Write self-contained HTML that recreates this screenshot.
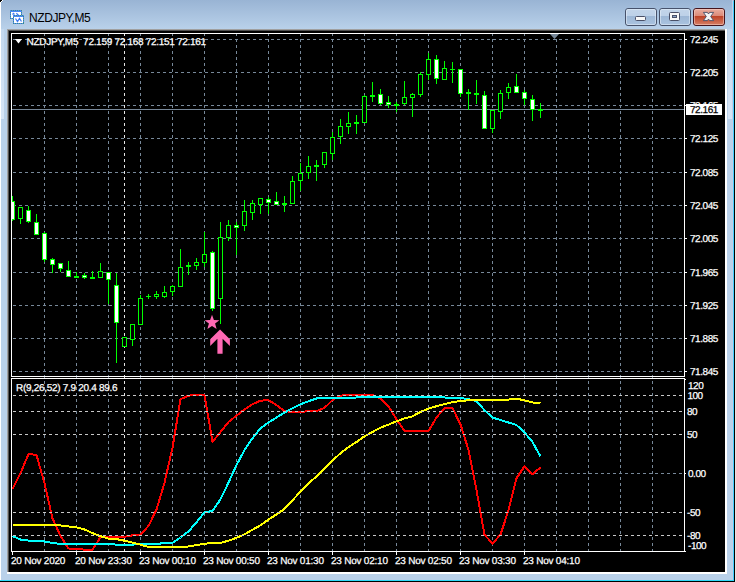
<!DOCTYPE html>
<html lang="en"><head><meta charset="utf-8"><title>NZDJPY,M5</title>
<style>html,body{margin:0;padding:0;background:#b9d1ea;overflow:hidden}svg{display:block}text{font-family:"Liberation Sans",Arial,sans-serif}.ax{font-size:10px;fill:#fff;stroke:#fff;stroke-width:0.25px;letter-spacing:-0.45px;text-rendering:geometricPrecision}.tm{letter-spacing:-0.23px}.hd{letter-spacing:-0.3px}</style></head><body>
<svg width="736" height="582" viewBox="0 0 736 582">
<defs><linearGradient id="tb" x1="0" y1="0" x2="0" y2="1"><stop offset="0" stop-color="#99b4d4"/><stop offset="1" stop-color="#b9d1ea"/></linearGradient><linearGradient id="bt" x1="0" y1="0" x2="0" y2="1"><stop offset="0" stop-color="#c3d5ea"/><stop offset="0.43" stop-color="#bdd1e8"/><stop offset="0.45" stop-color="#9db7d6"/><stop offset="1" stop-color="#abc4e0"/></linearGradient><linearGradient id="bc" x1="0" y1="0" x2="0" y2="1"><stop offset="0" stop-color="#eab0a3"/><stop offset="0.43" stop-color="#dc8a78"/><stop offset="0.45" stop-color="#bd4126"/><stop offset="1" stop-color="#d88268"/></linearGradient><linearGradient id="sb" x1="0" y1="0" x2="0" y2="1"><stop offset="0" stop-color="#c3d8ee"/><stop offset="1" stop-color="#d6e5f6"/></linearGradient></defs>
<g shape-rendering="crispEdges">
<rect x="0" y="0" width="736" height="582" fill="#b9d1ea"/>
<rect x="0" y="0" width="736" height="29" fill="url(#tb)"/>
<rect x="1" y="29" width="3" height="90" fill="url(#sb)"/><rect x="728" y="29" width="4" height="90" fill="url(#sb)"/>
<rect x="0" y="2" width="1" height="578" fill="#ffffff"/>
<rect x="732" y="0" width="1" height="580" fill="#c4cde6"/>
<rect x="733" y="1" width="1" height="580" fill="#40d0ff"/>
<rect x="0" y="580" width="734" height="1" fill="#30d8f8"/>
<rect x="734" y="0" width="1" height="582" fill="#000"/>
<rect x="735" y="0" width="1" height="582" fill="#e4e4e4"/>
<rect x="0" y="581" width="735" height="1" fill="#000"/>
<rect x="0" y="0" width="2" height="1" fill="#000"/><rect x="0" y="1" width="1" height="1" fill="#000"/>
<rect x="2" y="0" width="1" height="1" fill="#fff"/><rect x="1" y="1" width="1" height="1" fill="#fff"/>
<rect x="7" y="29" width="720" height="545" fill="#ffffff"/>
<rect x="7" y="29" width="718" height="543" fill="#a0a0a0"/>
<rect x="8" y="30" width="717" height="542" fill="#505050"/>
<rect x="9" y="31" width="716" height="541" fill="#000000"/>
</g>
<g shape-rendering="crispEdges">
<path d="M13 39h3M19 39h3M25 39h3M31 39h3M37 39h3M43 39h3M49 39h3M55 39h3M61 39h3M67 39h3M73 39h3M79 39h3M85 39h3M91 39h3M97 39h3M103 39h3M109 39h3M115 39h3M121 39h3M127 39h3M133 39h3M139 39h3M145 39h3M151 39h3M157 39h3M163 39h3M169 39h3M175 39h3M181 39h3M187 39h3M193 39h3M199 39h3M205 39h3M211 39h3M217 39h3M223 39h3M229 39h3M235 39h3M241 39h3M247 39h3M253 39h3M259 39h3M265 39h3M271 39h3M277 39h3M283 39h3M289 39h3M295 39h3M301 39h3M307 39h3M313 39h3M319 39h3M325 39h3M331 39h3M337 39h3M343 39h3M349 39h3M355 39h3M361 39h3M367 39h3M373 39h3M379 39h3M385 39h3M391 39h3M397 39h3M403 39h3M409 39h3M415 39h3M421 39h3M427 39h3M433 39h3M439 39h3M445 39h3M451 39h3M457 39h3M463 39h3M469 39h3M475 39h3M481 39h3M487 39h3M493 39h3M499 39h3M505 39h3M511 39h3M517 39h3M523 39h3M529 39h3M535 39h3M541 39h3M547 39h3M553 39h3M559 39h3M565 39h3M571 39h3M577 39h3M583 39h3M589 39h3M595 39h3M601 39h3M607 39h3M613 39h3M619 39h3M625 39h3M631 39h3M637 39h3M643 39h3M649 39h3M655 39h3M661 39h3M667 39h3M673 39h3M679 39h3" stroke="#778899" stroke-width="1" fill="none" transform="translate(0,0.5)"/>
<path d="M13 72h3M19 72h3M25 72h3M31 72h3M37 72h3M43 72h3M49 72h3M55 72h3M61 72h3M67 72h3M73 72h3M79 72h3M85 72h3M91 72h3M97 72h3M103 72h3M109 72h3M115 72h3M121 72h3M127 72h3M133 72h3M139 72h3M145 72h3M151 72h3M157 72h3M163 72h3M169 72h3M175 72h3M181 72h3M187 72h3M193 72h3M199 72h3M205 72h3M211 72h3M217 72h3M223 72h3M229 72h3M235 72h3M241 72h3M247 72h3M253 72h3M259 72h3M265 72h3M271 72h3M277 72h3M283 72h3M289 72h3M295 72h3M301 72h3M307 72h3M313 72h3M319 72h3M325 72h3M331 72h3M337 72h3M343 72h3M349 72h3M355 72h3M361 72h3M367 72h3M373 72h3M379 72h3M385 72h3M391 72h3M397 72h3M403 72h3M409 72h3M415 72h3M421 72h3M427 72h3M433 72h3M439 72h3M445 72h3M451 72h3M457 72h3M463 72h3M469 72h3M475 72h3M481 72h3M487 72h3M493 72h3M499 72h3M505 72h3M511 72h3M517 72h3M523 72h3M529 72h3M535 72h3M541 72h3M547 72h3M553 72h3M559 72h3M565 72h3M571 72h3M577 72h3M583 72h3M589 72h3M595 72h3M601 72h3M607 72h3M613 72h3M619 72h3M625 72h3M631 72h3M637 72h3M643 72h3M649 72h3M655 72h3M661 72h3M667 72h3M673 72h3M679 72h3" stroke="#778899" stroke-width="1" fill="none" transform="translate(0,0.5)"/>
<path d="M13 105h3M19 105h3M25 105h3M31 105h3M37 105h3M43 105h3M49 105h3M55 105h3M61 105h3M67 105h3M73 105h3M79 105h3M85 105h3M91 105h3M97 105h3M103 105h3M109 105h3M115 105h3M121 105h3M127 105h3M133 105h3M139 105h3M145 105h3M151 105h3M157 105h3M163 105h3M169 105h3M175 105h3M181 105h3M187 105h3M193 105h3M199 105h3M205 105h3M211 105h3M217 105h3M223 105h3M229 105h3M235 105h3M241 105h3M247 105h3M253 105h3M259 105h3M265 105h3M271 105h3M277 105h3M283 105h3M289 105h3M295 105h3M301 105h3M307 105h3M313 105h3M319 105h3M325 105h3M331 105h3M337 105h3M343 105h3M349 105h3M355 105h3M361 105h3M367 105h3M373 105h3M379 105h3M385 105h3M391 105h3M397 105h3M403 105h3M409 105h3M415 105h3M421 105h3M427 105h3M433 105h3M439 105h3M445 105h3M451 105h3M457 105h3M463 105h3M469 105h3M475 105h3M481 105h3M487 105h3M493 105h3M499 105h3M505 105h3M511 105h3M517 105h3M523 105h3M529 105h3M535 105h3M541 105h3M547 105h3M553 105h3M559 105h3M565 105h3M571 105h3M577 105h3M583 105h3M589 105h3M595 105h3M601 105h3M607 105h3M613 105h3M619 105h3M625 105h3M631 105h3M637 105h3M643 105h3M649 105h3M655 105h3M661 105h3M667 105h3M673 105h3M679 105h3" stroke="#778899" stroke-width="1" fill="none" transform="translate(0,0.5)"/>
<path d="M13 138h3M19 138h3M25 138h3M31 138h3M37 138h3M43 138h3M49 138h3M55 138h3M61 138h3M67 138h3M73 138h3M79 138h3M85 138h3M91 138h3M97 138h3M103 138h3M109 138h3M115 138h3M121 138h3M127 138h3M133 138h3M139 138h3M145 138h3M151 138h3M157 138h3M163 138h3M169 138h3M175 138h3M181 138h3M187 138h3M193 138h3M199 138h3M205 138h3M211 138h3M217 138h3M223 138h3M229 138h3M235 138h3M241 138h3M247 138h3M253 138h3M259 138h3M265 138h3M271 138h3M277 138h3M283 138h3M289 138h3M295 138h3M301 138h3M307 138h3M313 138h3M319 138h3M325 138h3M331 138h3M337 138h3M343 138h3M349 138h3M355 138h3M361 138h3M367 138h3M373 138h3M379 138h3M385 138h3M391 138h3M397 138h3M403 138h3M409 138h3M415 138h3M421 138h3M427 138h3M433 138h3M439 138h3M445 138h3M451 138h3M457 138h3M463 138h3M469 138h3M475 138h3M481 138h3M487 138h3M493 138h3M499 138h3M505 138h3M511 138h3M517 138h3M523 138h3M529 138h3M535 138h3M541 138h3M547 138h3M553 138h3M559 138h3M565 138h3M571 138h3M577 138h3M583 138h3M589 138h3M595 138h3M601 138h3M607 138h3M613 138h3M619 138h3M625 138h3M631 138h3M637 138h3M643 138h3M649 138h3M655 138h3M661 138h3M667 138h3M673 138h3M679 138h3" stroke="#778899" stroke-width="1" fill="none" transform="translate(0,0.5)"/>
<path d="M13 172h3M19 172h3M25 172h3M31 172h3M37 172h3M43 172h3M49 172h3M55 172h3M61 172h3M67 172h3M73 172h3M79 172h3M85 172h3M91 172h3M97 172h3M103 172h3M109 172h3M115 172h3M121 172h3M127 172h3M133 172h3M139 172h3M145 172h3M151 172h3M157 172h3M163 172h3M169 172h3M175 172h3M181 172h3M187 172h3M193 172h3M199 172h3M205 172h3M211 172h3M217 172h3M223 172h3M229 172h3M235 172h3M241 172h3M247 172h3M253 172h3M259 172h3M265 172h3M271 172h3M277 172h3M283 172h3M289 172h3M295 172h3M301 172h3M307 172h3M313 172h3M319 172h3M325 172h3M331 172h3M337 172h3M343 172h3M349 172h3M355 172h3M361 172h3M367 172h3M373 172h3M379 172h3M385 172h3M391 172h3M397 172h3M403 172h3M409 172h3M415 172h3M421 172h3M427 172h3M433 172h3M439 172h3M445 172h3M451 172h3M457 172h3M463 172h3M469 172h3M475 172h3M481 172h3M487 172h3M493 172h3M499 172h3M505 172h3M511 172h3M517 172h3M523 172h3M529 172h3M535 172h3M541 172h3M547 172h3M553 172h3M559 172h3M565 172h3M571 172h3M577 172h3M583 172h3M589 172h3M595 172h3M601 172h3M607 172h3M613 172h3M619 172h3M625 172h3M631 172h3M637 172h3M643 172h3M649 172h3M655 172h3M661 172h3M667 172h3M673 172h3M679 172h3" stroke="#778899" stroke-width="1" fill="none" transform="translate(0,0.5)"/>
<path d="M13 205h3M19 205h3M25 205h3M31 205h3M37 205h3M43 205h3M49 205h3M55 205h3M61 205h3M67 205h3M73 205h3M79 205h3M85 205h3M91 205h3M97 205h3M103 205h3M109 205h3M115 205h3M121 205h3M127 205h3M133 205h3M139 205h3M145 205h3M151 205h3M157 205h3M163 205h3M169 205h3M175 205h3M181 205h3M187 205h3M193 205h3M199 205h3M205 205h3M211 205h3M217 205h3M223 205h3M229 205h3M235 205h3M241 205h3M247 205h3M253 205h3M259 205h3M265 205h3M271 205h3M277 205h3M283 205h3M289 205h3M295 205h3M301 205h3M307 205h3M313 205h3M319 205h3M325 205h3M331 205h3M337 205h3M343 205h3M349 205h3M355 205h3M361 205h3M367 205h3M373 205h3M379 205h3M385 205h3M391 205h3M397 205h3M403 205h3M409 205h3M415 205h3M421 205h3M427 205h3M433 205h3M439 205h3M445 205h3M451 205h3M457 205h3M463 205h3M469 205h3M475 205h3M481 205h3M487 205h3M493 205h3M499 205h3M505 205h3M511 205h3M517 205h3M523 205h3M529 205h3M535 205h3M541 205h3M547 205h3M553 205h3M559 205h3M565 205h3M571 205h3M577 205h3M583 205h3M589 205h3M595 205h3M601 205h3M607 205h3M613 205h3M619 205h3M625 205h3M631 205h3M637 205h3M643 205h3M649 205h3M655 205h3M661 205h3M667 205h3M673 205h3M679 205h3" stroke="#778899" stroke-width="1" fill="none" transform="translate(0,0.5)"/>
<path d="M13 238h3M19 238h3M25 238h3M31 238h3M37 238h3M43 238h3M49 238h3M55 238h3M61 238h3M67 238h3M73 238h3M79 238h3M85 238h3M91 238h3M97 238h3M103 238h3M109 238h3M115 238h3M121 238h3M127 238h3M133 238h3M139 238h3M145 238h3M151 238h3M157 238h3M163 238h3M169 238h3M175 238h3M181 238h3M187 238h3M193 238h3M199 238h3M205 238h3M211 238h3M217 238h3M223 238h3M229 238h3M235 238h3M241 238h3M247 238h3M253 238h3M259 238h3M265 238h3M271 238h3M277 238h3M283 238h3M289 238h3M295 238h3M301 238h3M307 238h3M313 238h3M319 238h3M325 238h3M331 238h3M337 238h3M343 238h3M349 238h3M355 238h3M361 238h3M367 238h3M373 238h3M379 238h3M385 238h3M391 238h3M397 238h3M403 238h3M409 238h3M415 238h3M421 238h3M427 238h3M433 238h3M439 238h3M445 238h3M451 238h3M457 238h3M463 238h3M469 238h3M475 238h3M481 238h3M487 238h3M493 238h3M499 238h3M505 238h3M511 238h3M517 238h3M523 238h3M529 238h3M535 238h3M541 238h3M547 238h3M553 238h3M559 238h3M565 238h3M571 238h3M577 238h3M583 238h3M589 238h3M595 238h3M601 238h3M607 238h3M613 238h3M619 238h3M625 238h3M631 238h3M637 238h3M643 238h3M649 238h3M655 238h3M661 238h3M667 238h3M673 238h3M679 238h3" stroke="#778899" stroke-width="1" fill="none" transform="translate(0,0.5)"/>
<path d="M13 272h3M19 272h3M25 272h3M31 272h3M37 272h3M43 272h3M49 272h3M55 272h3M61 272h3M67 272h3M73 272h3M79 272h3M85 272h3M91 272h3M97 272h3M103 272h3M109 272h3M115 272h3M121 272h3M127 272h3M133 272h3M139 272h3M145 272h3M151 272h3M157 272h3M163 272h3M169 272h3M175 272h3M181 272h3M187 272h3M193 272h3M199 272h3M205 272h3M211 272h3M217 272h3M223 272h3M229 272h3M235 272h3M241 272h3M247 272h3M253 272h3M259 272h3M265 272h3M271 272h3M277 272h3M283 272h3M289 272h3M295 272h3M301 272h3M307 272h3M313 272h3M319 272h3M325 272h3M331 272h3M337 272h3M343 272h3M349 272h3M355 272h3M361 272h3M367 272h3M373 272h3M379 272h3M385 272h3M391 272h3M397 272h3M403 272h3M409 272h3M415 272h3M421 272h3M427 272h3M433 272h3M439 272h3M445 272h3M451 272h3M457 272h3M463 272h3M469 272h3M475 272h3M481 272h3M487 272h3M493 272h3M499 272h3M505 272h3M511 272h3M517 272h3M523 272h3M529 272h3M535 272h3M541 272h3M547 272h3M553 272h3M559 272h3M565 272h3M571 272h3M577 272h3M583 272h3M589 272h3M595 272h3M601 272h3M607 272h3M613 272h3M619 272h3M625 272h3M631 272h3M637 272h3M643 272h3M649 272h3M655 272h3M661 272h3M667 272h3M673 272h3M679 272h3" stroke="#778899" stroke-width="1" fill="none" transform="translate(0,0.5)"/>
<path d="M13 305h3M19 305h3M25 305h3M31 305h3M37 305h3M43 305h3M49 305h3M55 305h3M61 305h3M67 305h3M73 305h3M79 305h3M85 305h3M91 305h3M97 305h3M103 305h3M109 305h3M115 305h3M121 305h3M127 305h3M133 305h3M139 305h3M145 305h3M151 305h3M157 305h3M163 305h3M169 305h3M175 305h3M181 305h3M187 305h3M193 305h3M199 305h3M205 305h3M211 305h3M217 305h3M223 305h3M229 305h3M235 305h3M241 305h3M247 305h3M253 305h3M259 305h3M265 305h3M271 305h3M277 305h3M283 305h3M289 305h3M295 305h3M301 305h3M307 305h3M313 305h3M319 305h3M325 305h3M331 305h3M337 305h3M343 305h3M349 305h3M355 305h3M361 305h3M367 305h3M373 305h3M379 305h3M385 305h3M391 305h3M397 305h3M403 305h3M409 305h3M415 305h3M421 305h3M427 305h3M433 305h3M439 305h3M445 305h3M451 305h3M457 305h3M463 305h3M469 305h3M475 305h3M481 305h3M487 305h3M493 305h3M499 305h3M505 305h3M511 305h3M517 305h3M523 305h3M529 305h3M535 305h3M541 305h3M547 305h3M553 305h3M559 305h3M565 305h3M571 305h3M577 305h3M583 305h3M589 305h3M595 305h3M601 305h3M607 305h3M613 305h3M619 305h3M625 305h3M631 305h3M637 305h3M643 305h3M649 305h3M655 305h3M661 305h3M667 305h3M673 305h3M679 305h3" stroke="#778899" stroke-width="1" fill="none" transform="translate(0,0.5)"/>
<path d="M13 338h3M19 338h3M25 338h3M31 338h3M37 338h3M43 338h3M49 338h3M55 338h3M61 338h3M67 338h3M73 338h3M79 338h3M85 338h3M91 338h3M97 338h3M103 338h3M109 338h3M115 338h3M121 338h3M127 338h3M133 338h3M139 338h3M145 338h3M151 338h3M157 338h3M163 338h3M169 338h3M175 338h3M181 338h3M187 338h3M193 338h3M199 338h3M205 338h3M211 338h3M217 338h3M223 338h3M229 338h3M235 338h3M241 338h3M247 338h3M253 338h3M259 338h3M265 338h3M271 338h3M277 338h3M283 338h3M289 338h3M295 338h3M301 338h3M307 338h3M313 338h3M319 338h3M325 338h3M331 338h3M337 338h3M343 338h3M349 338h3M355 338h3M361 338h3M367 338h3M373 338h3M379 338h3M385 338h3M391 338h3M397 338h3M403 338h3M409 338h3M415 338h3M421 338h3M427 338h3M433 338h3M439 338h3M445 338h3M451 338h3M457 338h3M463 338h3M469 338h3M475 338h3M481 338h3M487 338h3M493 338h3M499 338h3M505 338h3M511 338h3M517 338h3M523 338h3M529 338h3M535 338h3M541 338h3M547 338h3M553 338h3M559 338h3M565 338h3M571 338h3M577 338h3M583 338h3M589 338h3M595 338h3M601 338h3M607 338h3M613 338h3M619 338h3M625 338h3M631 338h3M637 338h3M643 338h3M649 338h3M655 338h3M661 338h3M667 338h3M673 338h3M679 338h3" stroke="#778899" stroke-width="1" fill="none" transform="translate(0,0.5)"/>
<path d="M13 371h3M19 371h3M25 371h3M31 371h3M37 371h3M43 371h3M49 371h3M55 371h3M61 371h3M67 371h3M73 371h3M79 371h3M85 371h3M91 371h3M97 371h3M103 371h3M109 371h3M115 371h3M121 371h3M127 371h3M133 371h3M139 371h3M145 371h3M151 371h3M157 371h3M163 371h3M169 371h3M175 371h3M181 371h3M187 371h3M193 371h3M199 371h3M205 371h3M211 371h3M217 371h3M223 371h3M229 371h3M235 371h3M241 371h3M247 371h3M253 371h3M259 371h3M265 371h3M271 371h3M277 371h3M283 371h3M289 371h3M295 371h3M301 371h3M307 371h3M313 371h3M319 371h3M325 371h3M331 371h3M337 371h3M343 371h3M349 371h3M355 371h3M361 371h3M367 371h3M373 371h3M379 371h3M385 371h3M391 371h3M397 371h3M403 371h3M409 371h3M415 371h3M421 371h3M427 371h3M433 371h3M439 371h3M445 371h3M451 371h3M457 371h3M463 371h3M469 371h3M475 371h3M481 371h3M487 371h3M493 371h3M499 371h3M505 371h3M511 371h3M517 371h3M523 371h3M529 371h3M535 371h3M541 371h3M547 371h3M553 371h3M559 371h3M565 371h3M571 371h3M577 371h3M583 371h3M589 371h3M595 371h3M601 371h3M607 371h3M613 371h3M619 371h3M625 371h3M631 371h3M637 371h3M643 371h3M649 371h3M655 371h3M661 371h3M667 371h3M673 371h3M679 371h3" stroke="#778899" stroke-width="1" fill="none" transform="translate(0,0.5)"/>
<path d="M44 34v2M44 39v3M44 45v3M44 51v3M44 57v3M44 63v3M44 69v3M44 75v3M44 81v3M44 87v3M44 93v3M44 99v3M44 105v3M44 111v3M44 117v3M44 123v3M44 129v3M44 135v3M44 141v3M44 147v3M44 153v3M44 159v3M44 165v3M44 171v3M44 177v3M44 183v3M44 189v3M44 195v3M44 201v3M44 207v3M44 213v3M44 219v3M44 225v3M44 231v3M44 237v3M44 243v3M44 249v3M44 255v3M44 261v3M44 267v3M44 273v3M44 279v3M44 285v3M44 291v3M44 297v3M44 303v3M44 309v3M44 315v3M44 321v3M44 327v3M44 333v3M44 339v3M44 345v3M44 351v3M44 357v3M44 363v3M44 369v3M44 375v1" stroke="#778899" stroke-width="1" fill="none" transform="translate(0.5,0)"/>
<path d="M44 377v1" stroke="#778899" stroke-width="1" fill="none" transform="translate(0.5,0)"/>
<path d="M44 381v3M44 387v3M44 393v3M44 399v3M44 405v3M44 411v3M44 417v3M44 423v3M44 429v3M44 435v3M44 441v3M44 447v3M44 453v3M44 459v3M44 465v3M44 471v3M44 477v3M44 483v3M44 489v3M44 495v3M44 501v3M44 507v3M44 513v3M44 519v3M44 525v3M44 531v3M44 537v3M44 543v3M44 549v2" stroke="#778899" stroke-width="1" fill="none" transform="translate(0.5,0)"/>
<path d="M76 34v2M76 39v3M76 45v3M76 51v3M76 57v3M76 63v3M76 69v3M76 75v3M76 81v3M76 87v3M76 93v3M76 99v3M76 105v3M76 111v3M76 117v3M76 123v3M76 129v3M76 135v3M76 141v3M76 147v3M76 153v3M76 159v3M76 165v3M76 171v3M76 177v3M76 183v3M76 189v3M76 195v3M76 201v3M76 207v3M76 213v3M76 219v3M76 225v3M76 231v3M76 237v3M76 243v3M76 249v3M76 255v3M76 261v3M76 267v3M76 273v3M76 279v3M76 285v3M76 291v3M76 297v3M76 303v3M76 309v3M76 315v3M76 321v3M76 327v3M76 333v3M76 339v3M76 345v3M76 351v3M76 357v3M76 363v3M76 369v3M76 375v1" stroke="#778899" stroke-width="1" fill="none" transform="translate(0.5,0)"/>
<path d="M76 377v1" stroke="#778899" stroke-width="1" fill="none" transform="translate(0.5,0)"/>
<path d="M76 381v3M76 387v3M76 393v3M76 399v3M76 405v3M76 411v3M76 417v3M76 423v3M76 429v3M76 435v3M76 441v3M76 447v3M76 453v3M76 459v3M76 465v3M76 471v3M76 477v3M76 483v3M76 489v3M76 495v3M76 501v3M76 507v3M76 513v3M76 519v3M76 525v3M76 531v3M76 537v3M76 543v3M76 549v2" stroke="#778899" stroke-width="1" fill="none" transform="translate(0.5,0)"/>
<path d="M108 34v2M108 39v3M108 45v3M108 51v3M108 57v3M108 63v3M108 69v3M108 75v3M108 81v3M108 87v3M108 93v3M108 99v3M108 105v3M108 111v3M108 117v3M108 123v3M108 129v3M108 135v3M108 141v3M108 147v3M108 153v3M108 159v3M108 165v3M108 171v3M108 177v3M108 183v3M108 189v3M108 195v3M108 201v3M108 207v3M108 213v3M108 219v3M108 225v3M108 231v3M108 237v3M108 243v3M108 249v3M108 255v3M108 261v3M108 267v3M108 273v3M108 279v3M108 285v3M108 291v3M108 297v3M108 303v3M108 309v3M108 315v3M108 321v3M108 327v3M108 333v3M108 339v3M108 345v3M108 351v3M108 357v3M108 363v3M108 369v3M108 375v1" stroke="#778899" stroke-width="1" fill="none" transform="translate(0.5,0)"/>
<path d="M108 377v1" stroke="#778899" stroke-width="1" fill="none" transform="translate(0.5,0)"/>
<path d="M108 381v3M108 387v3M108 393v3M108 399v3M108 405v3M108 411v3M108 417v3M108 423v3M108 429v3M108 435v3M108 441v3M108 447v3M108 453v3M108 459v3M108 465v3M108 471v3M108 477v3M108 483v3M108 489v3M108 495v3M108 501v3M108 507v3M108 513v3M108 519v3M108 525v3M108 531v3M108 537v3M108 543v3M108 549v2" stroke="#778899" stroke-width="1" fill="none" transform="translate(0.5,0)"/>
<path d="M140 34v2M140 39v3M140 45v3M140 51v3M140 57v3M140 63v3M140 69v3M140 75v3M140 81v3M140 87v3M140 93v3M140 99v3M140 105v3M140 111v3M140 117v3M140 123v3M140 129v3M140 135v3M140 141v3M140 147v3M140 153v3M140 159v3M140 165v3M140 171v3M140 177v3M140 183v3M140 189v3M140 195v3M140 201v3M140 207v3M140 213v3M140 219v3M140 225v3M140 231v3M140 237v3M140 243v3M140 249v3M140 255v3M140 261v3M140 267v3M140 273v3M140 279v3M140 285v3M140 291v3M140 297v3M140 303v3M140 309v3M140 315v3M140 321v3M140 327v3M140 333v3M140 339v3M140 345v3M140 351v3M140 357v3M140 363v3M140 369v3M140 375v1" stroke="#778899" stroke-width="1" fill="none" transform="translate(0.5,0)"/>
<path d="M140 377v1" stroke="#778899" stroke-width="1" fill="none" transform="translate(0.5,0)"/>
<path d="M140 381v3M140 387v3M140 393v3M140 399v3M140 405v3M140 411v3M140 417v3M140 423v3M140 429v3M140 435v3M140 441v3M140 447v3M140 453v3M140 459v3M140 465v3M140 471v3M140 477v3M140 483v3M140 489v3M140 495v3M140 501v3M140 507v3M140 513v3M140 519v3M140 525v3M140 531v3M140 537v3M140 543v3M140 549v2" stroke="#778899" stroke-width="1" fill="none" transform="translate(0.5,0)"/>
<path d="M172 34v2M172 39v3M172 45v3M172 51v3M172 57v3M172 63v3M172 69v3M172 75v3M172 81v3M172 87v3M172 93v3M172 99v3M172 105v3M172 111v3M172 117v3M172 123v3M172 129v3M172 135v3M172 141v3M172 147v3M172 153v3M172 159v3M172 165v3M172 171v3M172 177v3M172 183v3M172 189v3M172 195v3M172 201v3M172 207v3M172 213v3M172 219v3M172 225v3M172 231v3M172 237v3M172 243v3M172 249v3M172 255v3M172 261v3M172 267v3M172 273v3M172 279v3M172 285v3M172 291v3M172 297v3M172 303v3M172 309v3M172 315v3M172 321v3M172 327v3M172 333v3M172 339v3M172 345v3M172 351v3M172 357v3M172 363v3M172 369v3M172 375v1" stroke="#778899" stroke-width="1" fill="none" transform="translate(0.5,0)"/>
<path d="M172 377v1" stroke="#778899" stroke-width="1" fill="none" transform="translate(0.5,0)"/>
<path d="M172 381v3M172 387v3M172 393v3M172 399v3M172 405v3M172 411v3M172 417v3M172 423v3M172 429v3M172 435v3M172 441v3M172 447v3M172 453v3M172 459v3M172 465v3M172 471v3M172 477v3M172 483v3M172 489v3M172 495v3M172 501v3M172 507v3M172 513v3M172 519v3M172 525v3M172 531v3M172 537v3M172 543v3M172 549v2" stroke="#778899" stroke-width="1" fill="none" transform="translate(0.5,0)"/>
<path d="M204 34v2M204 39v3M204 45v3M204 51v3M204 57v3M204 63v3M204 69v3M204 75v3M204 81v3M204 87v3M204 93v3M204 99v3M204 105v3M204 111v3M204 117v3M204 123v3M204 129v3M204 135v3M204 141v3M204 147v3M204 153v3M204 159v3M204 165v3M204 171v3M204 177v3M204 183v3M204 189v3M204 195v3M204 201v3M204 207v3M204 213v3M204 219v3M204 225v3M204 231v3M204 237v3M204 243v3M204 249v3M204 255v3M204 261v3M204 267v3M204 273v3M204 279v3M204 285v3M204 291v3M204 297v3M204 303v3M204 309v3M204 315v3M204 321v3M204 327v3M204 333v3M204 339v3M204 345v3M204 351v3M204 357v3M204 363v3M204 369v3M204 375v1" stroke="#778899" stroke-width="1" fill="none" transform="translate(0.5,0)"/>
<path d="M204 377v1" stroke="#778899" stroke-width="1" fill="none" transform="translate(0.5,0)"/>
<path d="M204 381v3M204 387v3M204 393v3M204 399v3M204 405v3M204 411v3M204 417v3M204 423v3M204 429v3M204 435v3M204 441v3M204 447v3M204 453v3M204 459v3M204 465v3M204 471v3M204 477v3M204 483v3M204 489v3M204 495v3M204 501v3M204 507v3M204 513v3M204 519v3M204 525v3M204 531v3M204 537v3M204 543v3M204 549v2" stroke="#778899" stroke-width="1" fill="none" transform="translate(0.5,0)"/>
<path d="M236 34v2M236 39v3M236 45v3M236 51v3M236 57v3M236 63v3M236 69v3M236 75v3M236 81v3M236 87v3M236 93v3M236 99v3M236 105v3M236 111v3M236 117v3M236 123v3M236 129v3M236 135v3M236 141v3M236 147v3M236 153v3M236 159v3M236 165v3M236 171v3M236 177v3M236 183v3M236 189v3M236 195v3M236 201v3M236 207v3M236 213v3M236 219v3M236 225v3M236 231v3M236 237v3M236 243v3M236 249v3M236 255v3M236 261v3M236 267v3M236 273v3M236 279v3M236 285v3M236 291v3M236 297v3M236 303v3M236 309v3M236 315v3M236 321v3M236 327v3M236 333v3M236 339v3M236 345v3M236 351v3M236 357v3M236 363v3M236 369v3M236 375v1" stroke="#778899" stroke-width="1" fill="none" transform="translate(0.5,0)"/>
<path d="M236 377v1" stroke="#778899" stroke-width="1" fill="none" transform="translate(0.5,0)"/>
<path d="M236 381v3M236 387v3M236 393v3M236 399v3M236 405v3M236 411v3M236 417v3M236 423v3M236 429v3M236 435v3M236 441v3M236 447v3M236 453v3M236 459v3M236 465v3M236 471v3M236 477v3M236 483v3M236 489v3M236 495v3M236 501v3M236 507v3M236 513v3M236 519v3M236 525v3M236 531v3M236 537v3M236 543v3M236 549v2" stroke="#778899" stroke-width="1" fill="none" transform="translate(0.5,0)"/>
<path d="M268 34v2M268 39v3M268 45v3M268 51v3M268 57v3M268 63v3M268 69v3M268 75v3M268 81v3M268 87v3M268 93v3M268 99v3M268 105v3M268 111v3M268 117v3M268 123v3M268 129v3M268 135v3M268 141v3M268 147v3M268 153v3M268 159v3M268 165v3M268 171v3M268 177v3M268 183v3M268 189v3M268 195v3M268 201v3M268 207v3M268 213v3M268 219v3M268 225v3M268 231v3M268 237v3M268 243v3M268 249v3M268 255v3M268 261v3M268 267v3M268 273v3M268 279v3M268 285v3M268 291v3M268 297v3M268 303v3M268 309v3M268 315v3M268 321v3M268 327v3M268 333v3M268 339v3M268 345v3M268 351v3M268 357v3M268 363v3M268 369v3M268 375v1" stroke="#778899" stroke-width="1" fill="none" transform="translate(0.5,0)"/>
<path d="M268 377v1" stroke="#778899" stroke-width="1" fill="none" transform="translate(0.5,0)"/>
<path d="M268 381v3M268 387v3M268 393v3M268 399v3M268 405v3M268 411v3M268 417v3M268 423v3M268 429v3M268 435v3M268 441v3M268 447v3M268 453v3M268 459v3M268 465v3M268 471v3M268 477v3M268 483v3M268 489v3M268 495v3M268 501v3M268 507v3M268 513v3M268 519v3M268 525v3M268 531v3M268 537v3M268 543v3M268 549v2" stroke="#778899" stroke-width="1" fill="none" transform="translate(0.5,0)"/>
<path d="M300 34v2M300 39v3M300 45v3M300 51v3M300 57v3M300 63v3M300 69v3M300 75v3M300 81v3M300 87v3M300 93v3M300 99v3M300 105v3M300 111v3M300 117v3M300 123v3M300 129v3M300 135v3M300 141v3M300 147v3M300 153v3M300 159v3M300 165v3M300 171v3M300 177v3M300 183v3M300 189v3M300 195v3M300 201v3M300 207v3M300 213v3M300 219v3M300 225v3M300 231v3M300 237v3M300 243v3M300 249v3M300 255v3M300 261v3M300 267v3M300 273v3M300 279v3M300 285v3M300 291v3M300 297v3M300 303v3M300 309v3M300 315v3M300 321v3M300 327v3M300 333v3M300 339v3M300 345v3M300 351v3M300 357v3M300 363v3M300 369v3M300 375v1" stroke="#778899" stroke-width="1" fill="none" transform="translate(0.5,0)"/>
<path d="M300 377v1" stroke="#778899" stroke-width="1" fill="none" transform="translate(0.5,0)"/>
<path d="M300 381v3M300 387v3M300 393v3M300 399v3M300 405v3M300 411v3M300 417v3M300 423v3M300 429v3M300 435v3M300 441v3M300 447v3M300 453v3M300 459v3M300 465v3M300 471v3M300 477v3M300 483v3M300 489v3M300 495v3M300 501v3M300 507v3M300 513v3M300 519v3M300 525v3M300 531v3M300 537v3M300 543v3M300 549v2" stroke="#778899" stroke-width="1" fill="none" transform="translate(0.5,0)"/>
<path d="M332 34v2M332 39v3M332 45v3M332 51v3M332 57v3M332 63v3M332 69v3M332 75v3M332 81v3M332 87v3M332 93v3M332 99v3M332 105v3M332 111v3M332 117v3M332 123v3M332 129v3M332 135v3M332 141v3M332 147v3M332 153v3M332 159v3M332 165v3M332 171v3M332 177v3M332 183v3M332 189v3M332 195v3M332 201v3M332 207v3M332 213v3M332 219v3M332 225v3M332 231v3M332 237v3M332 243v3M332 249v3M332 255v3M332 261v3M332 267v3M332 273v3M332 279v3M332 285v3M332 291v3M332 297v3M332 303v3M332 309v3M332 315v3M332 321v3M332 327v3M332 333v3M332 339v3M332 345v3M332 351v3M332 357v3M332 363v3M332 369v3M332 375v1" stroke="#778899" stroke-width="1" fill="none" transform="translate(0.5,0)"/>
<path d="M332 377v1" stroke="#778899" stroke-width="1" fill="none" transform="translate(0.5,0)"/>
<path d="M332 381v3M332 387v3M332 393v3M332 399v3M332 405v3M332 411v3M332 417v3M332 423v3M332 429v3M332 435v3M332 441v3M332 447v3M332 453v3M332 459v3M332 465v3M332 471v3M332 477v3M332 483v3M332 489v3M332 495v3M332 501v3M332 507v3M332 513v3M332 519v3M332 525v3M332 531v3M332 537v3M332 543v3M332 549v2" stroke="#778899" stroke-width="1" fill="none" transform="translate(0.5,0)"/>
<path d="M364 34v2M364 39v3M364 45v3M364 51v3M364 57v3M364 63v3M364 69v3M364 75v3M364 81v3M364 87v3M364 93v3M364 99v3M364 105v3M364 111v3M364 117v3M364 123v3M364 129v3M364 135v3M364 141v3M364 147v3M364 153v3M364 159v3M364 165v3M364 171v3M364 177v3M364 183v3M364 189v3M364 195v3M364 201v3M364 207v3M364 213v3M364 219v3M364 225v3M364 231v3M364 237v3M364 243v3M364 249v3M364 255v3M364 261v3M364 267v3M364 273v3M364 279v3M364 285v3M364 291v3M364 297v3M364 303v3M364 309v3M364 315v3M364 321v3M364 327v3M364 333v3M364 339v3M364 345v3M364 351v3M364 357v3M364 363v3M364 369v3M364 375v1" stroke="#778899" stroke-width="1" fill="none" transform="translate(0.5,0)"/>
<path d="M364 377v1" stroke="#778899" stroke-width="1" fill="none" transform="translate(0.5,0)"/>
<path d="M364 381v3M364 387v3M364 393v3M364 399v3M364 405v3M364 411v3M364 417v3M364 423v3M364 429v3M364 435v3M364 441v3M364 447v3M364 453v3M364 459v3M364 465v3M364 471v3M364 477v3M364 483v3M364 489v3M364 495v3M364 501v3M364 507v3M364 513v3M364 519v3M364 525v3M364 531v3M364 537v3M364 543v3M364 549v2" stroke="#778899" stroke-width="1" fill="none" transform="translate(0.5,0)"/>
<path d="M396 34v2M396 39v3M396 45v3M396 51v3M396 57v3M396 63v3M396 69v3M396 75v3M396 81v3M396 87v3M396 93v3M396 99v3M396 105v3M396 111v3M396 117v3M396 123v3M396 129v3M396 135v3M396 141v3M396 147v3M396 153v3M396 159v3M396 165v3M396 171v3M396 177v3M396 183v3M396 189v3M396 195v3M396 201v3M396 207v3M396 213v3M396 219v3M396 225v3M396 231v3M396 237v3M396 243v3M396 249v3M396 255v3M396 261v3M396 267v3M396 273v3M396 279v3M396 285v3M396 291v3M396 297v3M396 303v3M396 309v3M396 315v3M396 321v3M396 327v3M396 333v3M396 339v3M396 345v3M396 351v3M396 357v3M396 363v3M396 369v3M396 375v1" stroke="#778899" stroke-width="1" fill="none" transform="translate(0.5,0)"/>
<path d="M396 377v1" stroke="#778899" stroke-width="1" fill="none" transform="translate(0.5,0)"/>
<path d="M396 381v3M396 387v3M396 393v3M396 399v3M396 405v3M396 411v3M396 417v3M396 423v3M396 429v3M396 435v3M396 441v3M396 447v3M396 453v3M396 459v3M396 465v3M396 471v3M396 477v3M396 483v3M396 489v3M396 495v3M396 501v3M396 507v3M396 513v3M396 519v3M396 525v3M396 531v3M396 537v3M396 543v3M396 549v2" stroke="#778899" stroke-width="1" fill="none" transform="translate(0.5,0)"/>
<path d="M428 34v2M428 39v3M428 45v3M428 51v3M428 57v3M428 63v3M428 69v3M428 75v3M428 81v3M428 87v3M428 93v3M428 99v3M428 105v3M428 111v3M428 117v3M428 123v3M428 129v3M428 135v3M428 141v3M428 147v3M428 153v3M428 159v3M428 165v3M428 171v3M428 177v3M428 183v3M428 189v3M428 195v3M428 201v3M428 207v3M428 213v3M428 219v3M428 225v3M428 231v3M428 237v3M428 243v3M428 249v3M428 255v3M428 261v3M428 267v3M428 273v3M428 279v3M428 285v3M428 291v3M428 297v3M428 303v3M428 309v3M428 315v3M428 321v3M428 327v3M428 333v3M428 339v3M428 345v3M428 351v3M428 357v3M428 363v3M428 369v3M428 375v1" stroke="#778899" stroke-width="1" fill="none" transform="translate(0.5,0)"/>
<path d="M428 377v1" stroke="#778899" stroke-width="1" fill="none" transform="translate(0.5,0)"/>
<path d="M428 381v3M428 387v3M428 393v3M428 399v3M428 405v3M428 411v3M428 417v3M428 423v3M428 429v3M428 435v3M428 441v3M428 447v3M428 453v3M428 459v3M428 465v3M428 471v3M428 477v3M428 483v3M428 489v3M428 495v3M428 501v3M428 507v3M428 513v3M428 519v3M428 525v3M428 531v3M428 537v3M428 543v3M428 549v2" stroke="#778899" stroke-width="1" fill="none" transform="translate(0.5,0)"/>
<path d="M460 34v2M460 39v3M460 45v3M460 51v3M460 57v3M460 63v3M460 69v3M460 75v3M460 81v3M460 87v3M460 93v3M460 99v3M460 105v3M460 111v3M460 117v3M460 123v3M460 129v3M460 135v3M460 141v3M460 147v3M460 153v3M460 159v3M460 165v3M460 171v3M460 177v3M460 183v3M460 189v3M460 195v3M460 201v3M460 207v3M460 213v3M460 219v3M460 225v3M460 231v3M460 237v3M460 243v3M460 249v3M460 255v3M460 261v3M460 267v3M460 273v3M460 279v3M460 285v3M460 291v3M460 297v3M460 303v3M460 309v3M460 315v3M460 321v3M460 327v3M460 333v3M460 339v3M460 345v3M460 351v3M460 357v3M460 363v3M460 369v3M460 375v1" stroke="#778899" stroke-width="1" fill="none" transform="translate(0.5,0)"/>
<path d="M460 377v1" stroke="#778899" stroke-width="1" fill="none" transform="translate(0.5,0)"/>
<path d="M460 381v3M460 387v3M460 393v3M460 399v3M460 405v3M460 411v3M460 417v3M460 423v3M460 429v3M460 435v3M460 441v3M460 447v3M460 453v3M460 459v3M460 465v3M460 471v3M460 477v3M460 483v3M460 489v3M460 495v3M460 501v3M460 507v3M460 513v3M460 519v3M460 525v3M460 531v3M460 537v3M460 543v3M460 549v2" stroke="#778899" stroke-width="1" fill="none" transform="translate(0.5,0)"/>
<path d="M492 34v2M492 39v3M492 45v3M492 51v3M492 57v3M492 63v3M492 69v3M492 75v3M492 81v3M492 87v3M492 93v3M492 99v3M492 105v3M492 111v3M492 117v3M492 123v3M492 129v3M492 135v3M492 141v3M492 147v3M492 153v3M492 159v3M492 165v3M492 171v3M492 177v3M492 183v3M492 189v3M492 195v3M492 201v3M492 207v3M492 213v3M492 219v3M492 225v3M492 231v3M492 237v3M492 243v3M492 249v3M492 255v3M492 261v3M492 267v3M492 273v3M492 279v3M492 285v3M492 291v3M492 297v3M492 303v3M492 309v3M492 315v3M492 321v3M492 327v3M492 333v3M492 339v3M492 345v3M492 351v3M492 357v3M492 363v3M492 369v3M492 375v1" stroke="#778899" stroke-width="1" fill="none" transform="translate(0.5,0)"/>
<path d="M492 377v1" stroke="#778899" stroke-width="1" fill="none" transform="translate(0.5,0)"/>
<path d="M492 381v3M492 387v3M492 393v3M492 399v3M492 405v3M492 411v3M492 417v3M492 423v3M492 429v3M492 435v3M492 441v3M492 447v3M492 453v3M492 459v3M492 465v3M492 471v3M492 477v3M492 483v3M492 489v3M492 495v3M492 501v3M492 507v3M492 513v3M492 519v3M492 525v3M492 531v3M492 537v3M492 543v3M492 549v2" stroke="#778899" stroke-width="1" fill="none" transform="translate(0.5,0)"/>
<path d="M524 34v2M524 39v3M524 45v3M524 51v3M524 57v3M524 63v3M524 69v3M524 75v3M524 81v3M524 87v3M524 93v3M524 99v3M524 105v3M524 111v3M524 117v3M524 123v3M524 129v3M524 135v3M524 141v3M524 147v3M524 153v3M524 159v3M524 165v3M524 171v3M524 177v3M524 183v3M524 189v3M524 195v3M524 201v3M524 207v3M524 213v3M524 219v3M524 225v3M524 231v3M524 237v3M524 243v3M524 249v3M524 255v3M524 261v3M524 267v3M524 273v3M524 279v3M524 285v3M524 291v3M524 297v3M524 303v3M524 309v3M524 315v3M524 321v3M524 327v3M524 333v3M524 339v3M524 345v3M524 351v3M524 357v3M524 363v3M524 369v3M524 375v1" stroke="#778899" stroke-width="1" fill="none" transform="translate(0.5,0)"/>
<path d="M524 377v1" stroke="#778899" stroke-width="1" fill="none" transform="translate(0.5,0)"/>
<path d="M524 381v3M524 387v3M524 393v3M524 399v3M524 405v3M524 411v3M524 417v3M524 423v3M524 429v3M524 435v3M524 441v3M524 447v3M524 453v3M524 459v3M524 465v3M524 471v3M524 477v3M524 483v3M524 489v3M524 495v3M524 501v3M524 507v3M524 513v3M524 519v3M524 525v3M524 531v3M524 537v3M524 543v3M524 549v2" stroke="#778899" stroke-width="1" fill="none" transform="translate(0.5,0)"/>
<path d="M556 34v2M556 39v3M556 45v3M556 51v3M556 57v3M556 63v3M556 69v3M556 75v3M556 81v3M556 87v3M556 93v3M556 99v3M556 105v3M556 111v3M556 117v3M556 123v3M556 129v3M556 135v3M556 141v3M556 147v3M556 153v3M556 159v3M556 165v3M556 171v3M556 177v3M556 183v3M556 189v3M556 195v3M556 201v3M556 207v3M556 213v3M556 219v3M556 225v3M556 231v3M556 237v3M556 243v3M556 249v3M556 255v3M556 261v3M556 267v3M556 273v3M556 279v3M556 285v3M556 291v3M556 297v3M556 303v3M556 309v3M556 315v3M556 321v3M556 327v3M556 333v3M556 339v3M556 345v3M556 351v3M556 357v3M556 363v3M556 369v3M556 375v1" stroke="#778899" stroke-width="1" fill="none" transform="translate(0.5,0)"/>
<path d="M556 377v1" stroke="#778899" stroke-width="1" fill="none" transform="translate(0.5,0)"/>
<path d="M556 381v3M556 387v3M556 393v3M556 399v3M556 405v3M556 411v3M556 417v3M556 423v3M556 429v3M556 435v3M556 441v3M556 447v3M556 453v3M556 459v3M556 465v3M556 471v3M556 477v3M556 483v3M556 489v3M556 495v3M556 501v3M556 507v3M556 513v3M556 519v3M556 525v3M556 531v3M556 537v3M556 543v3M556 549v2" stroke="#778899" stroke-width="1" fill="none" transform="translate(0.5,0)"/>
<path d="M588 34v2M588 39v3M588 45v3M588 51v3M588 57v3M588 63v3M588 69v3M588 75v3M588 81v3M588 87v3M588 93v3M588 99v3M588 105v3M588 111v3M588 117v3M588 123v3M588 129v3M588 135v3M588 141v3M588 147v3M588 153v3M588 159v3M588 165v3M588 171v3M588 177v3M588 183v3M588 189v3M588 195v3M588 201v3M588 207v3M588 213v3M588 219v3M588 225v3M588 231v3M588 237v3M588 243v3M588 249v3M588 255v3M588 261v3M588 267v3M588 273v3M588 279v3M588 285v3M588 291v3M588 297v3M588 303v3M588 309v3M588 315v3M588 321v3M588 327v3M588 333v3M588 339v3M588 345v3M588 351v3M588 357v3M588 363v3M588 369v3M588 375v1" stroke="#778899" stroke-width="1" fill="none" transform="translate(0.5,0)"/>
<path d="M588 377v1" stroke="#778899" stroke-width="1" fill="none" transform="translate(0.5,0)"/>
<path d="M588 381v3M588 387v3M588 393v3M588 399v3M588 405v3M588 411v3M588 417v3M588 423v3M588 429v3M588 435v3M588 441v3M588 447v3M588 453v3M588 459v3M588 465v3M588 471v3M588 477v3M588 483v3M588 489v3M588 495v3M588 501v3M588 507v3M588 513v3M588 519v3M588 525v3M588 531v3M588 537v3M588 543v3M588 549v2" stroke="#778899" stroke-width="1" fill="none" transform="translate(0.5,0)"/>
<path d="M620 34v2M620 39v3M620 45v3M620 51v3M620 57v3M620 63v3M620 69v3M620 75v3M620 81v3M620 87v3M620 93v3M620 99v3M620 105v3M620 111v3M620 117v3M620 123v3M620 129v3M620 135v3M620 141v3M620 147v3M620 153v3M620 159v3M620 165v3M620 171v3M620 177v3M620 183v3M620 189v3M620 195v3M620 201v3M620 207v3M620 213v3M620 219v3M620 225v3M620 231v3M620 237v3M620 243v3M620 249v3M620 255v3M620 261v3M620 267v3M620 273v3M620 279v3M620 285v3M620 291v3M620 297v3M620 303v3M620 309v3M620 315v3M620 321v3M620 327v3M620 333v3M620 339v3M620 345v3M620 351v3M620 357v3M620 363v3M620 369v3M620 375v1" stroke="#778899" stroke-width="1" fill="none" transform="translate(0.5,0)"/>
<path d="M620 377v1" stroke="#778899" stroke-width="1" fill="none" transform="translate(0.5,0)"/>
<path d="M620 381v3M620 387v3M620 393v3M620 399v3M620 405v3M620 411v3M620 417v3M620 423v3M620 429v3M620 435v3M620 441v3M620 447v3M620 453v3M620 459v3M620 465v3M620 471v3M620 477v3M620 483v3M620 489v3M620 495v3M620 501v3M620 507v3M620 513v3M620 519v3M620 525v3M620 531v3M620 537v3M620 543v3M620 549v2" stroke="#778899" stroke-width="1" fill="none" transform="translate(0.5,0)"/>
<path d="M652 34v2M652 39v3M652 45v3M652 51v3M652 57v3M652 63v3M652 69v3M652 75v3M652 81v3M652 87v3M652 93v3M652 99v3M652 105v3M652 111v3M652 117v3M652 123v3M652 129v3M652 135v3M652 141v3M652 147v3M652 153v3M652 159v3M652 165v3M652 171v3M652 177v3M652 183v3M652 189v3M652 195v3M652 201v3M652 207v3M652 213v3M652 219v3M652 225v3M652 231v3M652 237v3M652 243v3M652 249v3M652 255v3M652 261v3M652 267v3M652 273v3M652 279v3M652 285v3M652 291v3M652 297v3M652 303v3M652 309v3M652 315v3M652 321v3M652 327v3M652 333v3M652 339v3M652 345v3M652 351v3M652 357v3M652 363v3M652 369v3M652 375v1" stroke="#778899" stroke-width="1" fill="none" transform="translate(0.5,0)"/>
<path d="M652 377v1" stroke="#778899" stroke-width="1" fill="none" transform="translate(0.5,0)"/>
<path d="M652 381v3M652 387v3M652 393v3M652 399v3M652 405v3M652 411v3M652 417v3M652 423v3M652 429v3M652 435v3M652 441v3M652 447v3M652 453v3M652 459v3M652 465v3M652 471v3M652 477v3M652 483v3M652 489v3M652 495v3M652 501v3M652 507v3M652 513v3M652 519v3M652 525v3M652 531v3M652 537v3M652 543v3M652 549v2" stroke="#778899" stroke-width="1" fill="none" transform="translate(0.5,0)"/>
<path d="M13 473h3M19 473h3M25 473h3M31 473h3M37 473h3M43 473h3M49 473h3M55 473h3M61 473h3M67 473h3M73 473h3M79 473h3M85 473h3M91 473h3M97 473h3M103 473h3M109 473h3M115 473h3M121 473h3M127 473h3M133 473h3M139 473h3M145 473h3M151 473h3M157 473h3M163 473h3M169 473h3M175 473h3M181 473h3M187 473h3M193 473h3M199 473h3M205 473h3M211 473h3M217 473h3M223 473h3M229 473h3M235 473h3M241 473h3M247 473h3M253 473h3M259 473h3M265 473h3M271 473h3M277 473h3M283 473h3M289 473h3M295 473h3M301 473h3M307 473h3M313 473h3M319 473h3M325 473h3M331 473h3M337 473h3M343 473h3M349 473h3M355 473h3M361 473h3M367 473h3M373 473h3M379 473h3M385 473h3M391 473h3M397 473h3M403 473h3M409 473h3M415 473h3M421 473h3M427 473h3M433 473h3M439 473h3M445 473h3M451 473h3M457 473h3M463 473h3M469 473h3M475 473h3M481 473h3M487 473h3M493 473h3M499 473h3M505 473h3M511 473h3M517 473h3M523 473h3M529 473h3M535 473h3M541 473h3M547 473h3M553 473h3M559 473h3M565 473h3M571 473h3M577 473h3M583 473h3M589 473h3M595 473h3M601 473h3M607 473h3M613 473h3M619 473h3M625 473h3M631 473h3M637 473h3M643 473h3M649 473h3M655 473h3M661 473h3M667 473h3M673 473h3M679 473h3" stroke="#778899" stroke-width="1" fill="none" transform="translate(0,0.5)"/>
<path d="M124 34v2M124 39v3M124 45v3M124 51v3M124 57v3M124 63v3M124 69v3M124 75v3M124 81v3M124 87v3M124 93v3M124 99v3M124 105v3M124 111v3M124 117v3M124 123v3M124 129v3M124 135v3M124 141v3M124 147v3M124 153v3M124 159v3M124 165v3M124 171v3M124 177v3M124 183v3M124 189v3M124 195v3M124 201v3M124 207v3M124 213v3M124 219v3M124 225v3M124 231v3M124 237v3M124 243v3M124 249v3M124 255v3M124 261v3M124 267v3M124 273v3M124 279v3M124 285v3M124 291v3M124 297v3M124 303v3M124 309v3M124 315v3M124 321v3M124 327v3M124 333v3M124 339v3M124 345v3M124 351v3M124 357v3M124 363v3M124 369v3M124 375v1" stroke="#e6e6e6" stroke-width="1" fill="none" transform="translate(0.5,0)"/>
<path d="M124 377v1" stroke="#e6e6e6" stroke-width="1" fill="none" transform="translate(0.5,0)"/>
<path d="M124 381v3M124 387v3M124 393v3M124 399v3M124 405v3M124 411v3M124 417v3M124 423v3M124 429v3M124 435v3M124 441v3M124 447v3M124 453v3M124 459v3M124 465v3M124 471v3M124 477v3M124 483v3M124 489v3M124 495v3M124 501v3M124 507v3M124 513v3M124 519v3M124 525v3M124 531v3M124 537v3M124 543v3M124 549v2" stroke="#e6e6e6" stroke-width="1" fill="none" transform="translate(0.5,0)"/>
<rect x="12" y="109" width="672" height="1" fill="#778899"/>
<path d="M550 34h9l-4.5 5z" fill="#778899" shape-rendering="auto"/>
</g>
<g shape-rendering="crispEdges">
<rect x="12" y="196" width="1" height="25" fill="#00ff00"/>
<rect x="12" y="201" width="3" height="19" fill="#00ff00"/>
<rect x="12" y="202" width="2" height="17" fill="#fff"/>
<rect x="20" y="207" width="1" height="17" fill="#00ff00"/>
<rect x="18" y="207" width="5" height="12" fill="#00ff00"/>
<rect x="19" y="208" width="3" height="10" fill="#000"/>
<rect x="28" y="206" width="1" height="17" fill="#00ff00"/>
<rect x="26" y="210" width="5" height="12" fill="#00ff00"/>
<rect x="27" y="211" width="3" height="10" fill="#fff"/>
<rect x="36" y="214" width="1" height="21" fill="#00ff00"/>
<rect x="34" y="222" width="5" height="13" fill="#00ff00"/>
<rect x="35" y="223" width="3" height="11" fill="#fff"/>
<rect x="44" y="232" width="1" height="30" fill="#00ff00"/>
<rect x="42" y="233" width="5" height="27" fill="#00ff00"/>
<rect x="43" y="234" width="3" height="25" fill="#fff"/>
<rect x="52" y="258" width="1" height="15" fill="#00ff00"/>
<rect x="50" y="259" width="5" height="6" fill="#00ff00"/>
<rect x="51" y="260" width="3" height="4" fill="#fff"/>
<rect x="60" y="263" width="1" height="9" fill="#00ff00"/>
<rect x="58" y="263" width="5" height="6" fill="#00ff00"/>
<rect x="59" y="264" width="3" height="4" fill="#fff"/>
<rect x="68" y="261" width="1" height="16" fill="#00ff00"/>
<rect x="66" y="270" width="5" height="7" fill="#00ff00"/>
<rect x="67" y="271" width="3" height="5" fill="#fff"/>
<rect x="76" y="272" width="1" height="6" fill="#00ff00"/>
<rect x="74" y="276" width="5" height="2" fill="#00ff00"/>
<rect x="84" y="273" width="1" height="6" fill="#00ff00"/>
<rect x="82" y="275" width="5" height="3" fill="#00ff00"/>
<rect x="83" y="276" width="3" height="1" fill="#fff"/>
<rect x="92" y="271" width="1" height="8" fill="#00ff00"/>
<rect x="90" y="277" width="5" height="2" fill="#00ff00"/>
<rect x="100" y="263" width="1" height="15" fill="#00ff00"/>
<rect x="98" y="271" width="5" height="7" fill="#00ff00"/>
<rect x="99" y="272" width="3" height="5" fill="#000"/>
<rect x="108" y="272" width="1" height="32" fill="#00ff00"/>
<rect x="106" y="272" width="5" height="8" fill="#00ff00"/>
<rect x="107" y="273" width="3" height="6" fill="#fff"/>
<rect x="116" y="273" width="1" height="90" fill="#00ff00"/>
<rect x="114" y="285" width="5" height="38" fill="#00ff00"/>
<rect x="115" y="286" width="3" height="36" fill="#fff"/>
<rect x="124" y="337" width="1" height="10" fill="#00ff00"/>
<rect x="122" y="337" width="5" height="10" fill="#00ff00"/>
<rect x="123" y="338" width="3" height="8" fill="#000"/>
<rect x="132" y="324" width="1" height="22" fill="#00ff00"/>
<rect x="130" y="324" width="5" height="16" fill="#00ff00"/>
<rect x="131" y="325" width="3" height="14" fill="#000"/>
<rect x="140" y="295" width="1" height="30" fill="#00ff00"/>
<rect x="138" y="298" width="5" height="27" fill="#00ff00"/>
<rect x="139" y="299" width="3" height="25" fill="#000"/>
<rect x="148" y="294" width="1" height="5" fill="#00ff00"/>
<rect x="146" y="296" width="5" height="1" fill="#00ff00"/>
<rect x="156" y="291" width="1" height="8" fill="#00ff00"/>
<rect x="154" y="294" width="5" height="3" fill="#00ff00"/>
<rect x="155" y="295" width="3" height="1" fill="#000"/>
<rect x="164" y="286" width="1" height="12" fill="#00ff00"/>
<rect x="162" y="292" width="5" height="5" fill="#00ff00"/>
<rect x="163" y="293" width="3" height="3" fill="#000"/>
<rect x="172" y="285" width="1" height="11" fill="#00ff00"/>
<rect x="170" y="286" width="5" height="6" fill="#00ff00"/>
<rect x="171" y="287" width="3" height="4" fill="#000"/>
<rect x="180" y="249" width="1" height="38" fill="#00ff00"/>
<rect x="178" y="267" width="5" height="20" fill="#00ff00"/>
<rect x="179" y="268" width="3" height="18" fill="#000"/>
<rect x="188" y="262" width="1" height="13" fill="#00ff00"/>
<rect x="186" y="265" width="5" height="2" fill="#00ff00"/>
<rect x="196" y="258" width="1" height="12" fill="#00ff00"/>
<rect x="194" y="262" width="5" height="4" fill="#00ff00"/>
<rect x="195" y="263" width="3" height="2" fill="#000"/>
<rect x="204" y="232" width="1" height="35" fill="#00ff00"/>
<rect x="202" y="254" width="5" height="9" fill="#00ff00"/>
<rect x="203" y="255" width="3" height="7" fill="#000"/>
<rect x="212" y="251" width="1" height="60" fill="#00ff00"/>
<rect x="210" y="252" width="5" height="57" fill="#00ff00"/>
<rect x="211" y="253" width="3" height="55" fill="#fff"/>
<rect x="220" y="222" width="1" height="102" fill="#00ff00"/>
<rect x="218" y="237" width="5" height="62" fill="#00ff00"/>
<rect x="219" y="238" width="3" height="60" fill="#000"/>
<rect x="228" y="220" width="1" height="21" fill="#00ff00"/>
<rect x="226" y="225" width="5" height="13" fill="#00ff00"/>
<rect x="227" y="226" width="3" height="11" fill="#000"/>
<rect x="236" y="222" width="1" height="33" fill="#00ff00"/>
<rect x="234" y="225" width="5" height="3" fill="#00ff00"/>
<rect x="235" y="226" width="3" height="1" fill="#fff"/>
<rect x="244" y="200" width="1" height="31" fill="#00ff00"/>
<rect x="242" y="211" width="5" height="15" fill="#00ff00"/>
<rect x="243" y="212" width="3" height="13" fill="#000"/>
<rect x="252" y="200" width="1" height="20" fill="#00ff00"/>
<rect x="250" y="203" width="5" height="10" fill="#00ff00"/>
<rect x="251" y="204" width="3" height="8" fill="#000"/>
<rect x="260" y="198" width="1" height="16" fill="#00ff00"/>
<rect x="258" y="198" width="5" height="7" fill="#00ff00"/>
<rect x="259" y="199" width="3" height="5" fill="#000"/>
<rect x="268" y="197" width="1" height="17" fill="#00ff00"/>
<rect x="266" y="199" width="5" height="4" fill="#00ff00"/>
<rect x="267" y="200" width="3" height="2" fill="#fff"/>
<rect x="276" y="192" width="1" height="13" fill="#00ff00"/>
<rect x="274" y="201" width="5" height="4" fill="#00ff00"/>
<rect x="275" y="202" width="3" height="2" fill="#fff"/>
<rect x="284" y="196" width="1" height="16" fill="#00ff00"/>
<rect x="282" y="203" width="5" height="2" fill="#00ff00"/>
<rect x="292" y="176" width="1" height="28" fill="#00ff00"/>
<rect x="290" y="181" width="5" height="23" fill="#00ff00"/>
<rect x="291" y="182" width="3" height="21" fill="#000"/>
<rect x="300" y="163" width="1" height="28" fill="#00ff00"/>
<rect x="298" y="173" width="5" height="8" fill="#00ff00"/>
<rect x="299" y="174" width="3" height="6" fill="#000"/>
<rect x="308" y="156" width="1" height="23" fill="#00ff00"/>
<rect x="306" y="166" width="5" height="7" fill="#00ff00"/>
<rect x="307" y="167" width="3" height="5" fill="#000"/>
<rect x="316" y="160" width="1" height="21" fill="#00ff00"/>
<rect x="314" y="165" width="5" height="2" fill="#00ff00"/>
<rect x="324" y="152" width="1" height="16" fill="#00ff00"/>
<rect x="322" y="152" width="5" height="13" fill="#00ff00"/>
<rect x="323" y="153" width="3" height="11" fill="#000"/>
<rect x="332" y="132" width="1" height="28" fill="#00ff00"/>
<rect x="330" y="137" width="5" height="17" fill="#00ff00"/>
<rect x="331" y="138" width="3" height="15" fill="#000"/>
<rect x="340" y="119" width="1" height="25" fill="#00ff00"/>
<rect x="338" y="126" width="5" height="11" fill="#00ff00"/>
<rect x="339" y="127" width="3" height="9" fill="#000"/>
<rect x="348" y="112" width="1" height="22" fill="#00ff00"/>
<rect x="346" y="123" width="5" height="4" fill="#00ff00"/>
<rect x="347" y="124" width="3" height="2" fill="#000"/>
<rect x="356" y="115" width="1" height="19" fill="#00ff00"/>
<rect x="354" y="122" width="5" height="2" fill="#00ff00"/>
<rect x="364" y="95" width="1" height="28" fill="#00ff00"/>
<rect x="362" y="96" width="5" height="27" fill="#00ff00"/>
<rect x="363" y="97" width="3" height="25" fill="#000"/>
<rect x="372" y="82" width="1" height="20" fill="#00ff00"/>
<rect x="370" y="95" width="5" height="2" fill="#00ff00"/>
<rect x="380" y="89" width="1" height="16" fill="#00ff00"/>
<rect x="378" y="94" width="5" height="10" fill="#00ff00"/>
<rect x="379" y="95" width="3" height="8" fill="#fff"/>
<rect x="388" y="96" width="1" height="12" fill="#00ff00"/>
<rect x="386" y="102" width="5" height="3" fill="#00ff00"/>
<rect x="387" y="103" width="3" height="1" fill="#fff"/>
<rect x="396" y="102" width="1" height="10" fill="#00ff00"/>
<rect x="394" y="104" width="5" height="2" fill="#00ff00"/>
<rect x="404" y="81" width="1" height="24" fill="#00ff00"/>
<rect x="402" y="97" width="5" height="7" fill="#00ff00"/>
<rect x="403" y="98" width="3" height="5" fill="#000"/>
<rect x="412" y="93" width="1" height="24" fill="#00ff00"/>
<rect x="410" y="94" width="5" height="4" fill="#00ff00"/>
<rect x="411" y="95" width="3" height="2" fill="#000"/>
<rect x="420" y="72" width="1" height="25" fill="#00ff00"/>
<rect x="418" y="74" width="5" height="21" fill="#00ff00"/>
<rect x="419" y="75" width="3" height="19" fill="#000"/>
<rect x="428" y="53" width="1" height="27" fill="#00ff00"/>
<rect x="426" y="59" width="5" height="16" fill="#00ff00"/>
<rect x="427" y="60" width="3" height="14" fill="#000"/>
<rect x="436" y="55" width="1" height="29" fill="#00ff00"/>
<rect x="434" y="59" width="5" height="20" fill="#00ff00"/>
<rect x="435" y="60" width="3" height="18" fill="#fff"/>
<rect x="444" y="61" width="1" height="19" fill="#00ff00"/>
<rect x="442" y="68" width="5" height="12" fill="#00ff00"/>
<rect x="443" y="69" width="3" height="10" fill="#000"/>
<rect x="452" y="62" width="1" height="21" fill="#00ff00"/>
<rect x="450" y="69" width="5" height="1" fill="#00ff00"/>
<rect x="460" y="69" width="1" height="28" fill="#00ff00"/>
<rect x="458" y="69" width="5" height="25" fill="#00ff00"/>
<rect x="459" y="70" width="3" height="23" fill="#fff"/>
<rect x="468" y="89" width="1" height="21" fill="#00ff00"/>
<rect x="466" y="92" width="5" height="2" fill="#00ff00"/>
<rect x="476" y="80" width="1" height="24" fill="#00ff00"/>
<rect x="474" y="93" width="5" height="2" fill="#00ff00"/>
<rect x="484" y="91" width="1" height="38" fill="#00ff00"/>
<rect x="482" y="95" width="5" height="34" fill="#00ff00"/>
<rect x="483" y="96" width="3" height="32" fill="#fff"/>
<rect x="492" y="110" width="1" height="23" fill="#00ff00"/>
<rect x="490" y="110" width="5" height="19" fill="#00ff00"/>
<rect x="491" y="111" width="3" height="17" fill="#000"/>
<rect x="500" y="90" width="1" height="29" fill="#00ff00"/>
<rect x="498" y="93" width="5" height="19" fill="#00ff00"/>
<rect x="499" y="94" width="3" height="17" fill="#000"/>
<rect x="508" y="83" width="1" height="16" fill="#00ff00"/>
<rect x="506" y="87" width="5" height="6" fill="#00ff00"/>
<rect x="507" y="88" width="3" height="4" fill="#000"/>
<rect x="516" y="74" width="1" height="19" fill="#00ff00"/>
<rect x="514" y="86" width="5" height="7" fill="#00ff00"/>
<rect x="515" y="87" width="3" height="5" fill="#fff"/>
<rect x="524" y="90" width="1" height="15" fill="#00ff00"/>
<rect x="522" y="92" width="5" height="7" fill="#00ff00"/>
<rect x="523" y="93" width="3" height="5" fill="#fff"/>
<rect x="532" y="95" width="1" height="26" fill="#00ff00"/>
<rect x="530" y="99" width="5" height="11" fill="#00ff00"/>
<rect x="531" y="100" width="3" height="9" fill="#fff"/>
<rect x="540" y="103" width="1" height="15" fill="#00ff00"/>
<rect x="538" y="109" width="5" height="2" fill="#00ff00"/>
</g>
<polygon points="212.0,314.8 213.9,319.9 219.4,320.2 215.1,323.6 216.6,328.9 212.0,325.9 207.4,328.9 208.9,323.6 204.6,320.2 210.1,319.9" fill="#ff69b4"/>
<polygon points="220.05,329.4 229.9,339.3 229.9,346 222.6,338.8 222.6,353.8 217.4,353.8 217.4,338.8 210.2,346 210.2,339.3" fill="#ff69b4"/>
<g shape-rendering="crispEdges">
<polyline points="12.5,488.9 20.5,473.2 28.5,454.0 36.5,455.0 44.5,483.3 52.5,518.4 60.5,536.0 68.5,548.5 76.5,548.5 84.5,549.8 92.5,549.8 100.5,537.2 108.5,536.8 116.5,536.8 124.5,536.8 132.5,535.3 140.5,534.7 148.5,525.9 156.5,509.6 164.5,482.7 172.5,447.7 180.5,399.3 188.5,395.6 196.5,395.0 204.5,395.0 212.5,441.8 220.5,432.0 228.5,422.0 236.5,415.6 244.5,409.4 252.5,404.3 260.5,400.6 268.5,400.3 276.5,405.0 284.5,411.2 292.5,411.9 300.5,411.9 308.5,411.2 316.5,411.2 324.5,407.9 332.5,400.0 340.5,395.6 348.5,395.0 356.5,395.0 364.5,395.0 372.5,395.0 380.5,398.7 388.5,406.2 396.5,419.4 404.5,430.7 412.5,431.0 420.5,431.0 428.5,431.0 436.5,417.5 444.5,408.1 452.5,408.1 460.5,424.4 468.5,450.0 476.5,490.2 484.5,534.7 492.5,543.5 500.5,534.7 508.5,510.2 516.5,478.3 524.5,466.3 532.5,474.1 540.5,467.4" fill="none" stroke="#ff0000" stroke-width="2" stroke-linejoin="round"/>
<polyline points="12.5,536.0 20.5,539.5 28.5,540.6 36.5,541.0 44.5,541.5 52.5,542.9 60.5,543.9 68.5,543.9 76.5,543.9 84.5,543.9 92.5,543.9 100.5,543.9 108.5,543.9 116.5,544.7 124.5,544.7 132.5,544.7 140.5,543.9 148.5,543.9 156.5,543.9 164.5,543.1 172.5,542.9 180.5,537.5 188.5,531.5 196.5,522.2 204.5,512.4 212.5,511.0 220.5,499.3 228.5,482.6 236.5,465.1 244.5,450.1 252.5,438.2 260.5,428.2 268.5,422.5 276.5,417.5 284.5,412.5 292.5,408.1 300.5,404.3 308.5,401.2 316.5,398.5 324.5,397.8 332.5,397.8 340.5,397.8 348.5,397.8 356.5,397.5 364.5,396.8 372.5,396.8 380.5,396.8 388.5,396.8 396.5,396.8 404.5,397.0 412.5,397.0 420.5,397.0 428.5,397.0 436.5,397.0 444.5,397.5 452.5,398.0 460.5,398.2 468.5,399.0 476.5,401.2 484.5,410.2 492.5,417.6 500.5,420.0 508.5,422.5 516.5,425.0 524.5,432.6 532.5,442.0 540.5,456.5" fill="none" stroke="#00ffff" stroke-width="2" stroke-linejoin="round"/>
<polyline points="12.5,525.3 20.5,525.3 28.5,525.3 36.5,525.3 44.5,525.3 52.5,525.3 60.5,525.5 68.5,526.5 76.5,527.4 84.5,529.4 92.5,533.2 100.5,536.2 108.5,538.7 116.5,539.1 124.5,540.7 132.5,542.6 140.5,544.7 148.5,547.0 156.5,547.0 164.5,547.0 172.5,547.0 180.5,547.0 188.5,546.5 196.5,545.1 204.5,543.7 212.5,543.1 220.5,542.9 228.5,540.7 236.5,537.8 244.5,534.4 252.5,529.7 260.5,525.3 268.5,519.6 276.5,514.4 284.5,509.0 292.5,500.2 300.5,491.7 308.5,483.3 316.5,476.4 324.5,468.2 332.5,460.7 340.5,453.2 348.5,447.2 356.5,442.0 364.5,436.3 372.5,432.0 380.5,427.6 388.5,424.7 396.5,421.3 404.5,418.4 412.5,416.3 420.5,411.9 428.5,408.7 436.5,406.2 444.5,404.1 452.5,402.2 460.5,401.0 468.5,400.3 476.5,400.1 484.5,400.1 492.5,400.1 500.5,400.1 508.5,399.6 516.5,398.7 524.5,400.3 532.5,402.5 540.5,403.1" fill="none" stroke="#ffff00" stroke-width="2" stroke-linejoin="round"/>
<path d="M13 395h3M19 395h3M25 395h3M31 395h3M37 395h3M43 395h3M49 395h3M55 395h3M61 395h3M67 395h3M73 395h3M79 395h3M85 395h3M91 395h3M97 395h3M103 395h3M109 395h3M115 395h3M121 395h3M127 395h3M133 395h3M139 395h3M145 395h3M151 395h3M157 395h3M163 395h3M169 395h3M175 395h3M181 395h3M187 395h3M193 395h3M199 395h3M205 395h3M211 395h3M217 395h3M223 395h3M229 395h3M235 395h3M241 395h3M247 395h3M253 395h3M259 395h3M265 395h3M271 395h3M277 395h3M283 395h3M289 395h3M295 395h3M301 395h3M307 395h3M313 395h3M319 395h3M325 395h3M331 395h3M337 395h3M343 395h3M349 395h3M355 395h3M361 395h3M367 395h3M373 395h3M379 395h3M385 395h3M391 395h3M397 395h3M403 395h3M409 395h3M415 395h3M421 395h3M427 395h3M433 395h3M439 395h3M445 395h3M451 395h3M457 395h3M463 395h3M469 395h3M475 395h3M481 395h3M487 395h3M493 395h3M499 395h3M505 395h3M511 395h3M517 395h3M523 395h3M529 395h3M535 395h3M541 395h3M547 395h3M553 395h3M559 395h3M565 395h3M571 395h3M577 395h3M583 395h3M589 395h3M595 395h3M601 395h3M607 395h3M613 395h3M619 395h3M625 395h3M631 395h3M637 395h3M643 395h3M649 395h3M655 395h3M661 395h3M667 395h3M673 395h3M679 395h3" stroke="#c8c8c8" stroke-width="1" fill="none" transform="translate(0,0.5)"/>
<path d="M13 411h3M19 411h3M25 411h3M31 411h3M37 411h3M43 411h3M49 411h3M55 411h3M61 411h3M67 411h3M73 411h3M79 411h3M85 411h3M91 411h3M97 411h3M103 411h3M109 411h3M115 411h3M121 411h3M127 411h3M133 411h3M139 411h3M145 411h3M151 411h3M157 411h3M163 411h3M169 411h3M175 411h3M181 411h3M187 411h3M193 411h3M199 411h3M205 411h3M211 411h3M217 411h3M223 411h3M229 411h3M235 411h3M241 411h3M247 411h3M253 411h3M259 411h3M265 411h3M271 411h3M277 411h3M283 411h3M289 411h3M295 411h3M301 411h3M307 411h3M313 411h3M319 411h3M325 411h3M331 411h3M337 411h3M343 411h3M349 411h3M355 411h3M361 411h3M367 411h3M373 411h3M379 411h3M385 411h3M391 411h3M397 411h3M403 411h3M409 411h3M415 411h3M421 411h3M427 411h3M433 411h3M439 411h3M445 411h3M451 411h3M457 411h3M463 411h3M469 411h3M475 411h3M481 411h3M487 411h3M493 411h3M499 411h3M505 411h3M511 411h3M517 411h3M523 411h3M529 411h3M535 411h3M541 411h3M547 411h3M553 411h3M559 411h3M565 411h3M571 411h3M577 411h3M583 411h3M589 411h3M595 411h3M601 411h3M607 411h3M613 411h3M619 411h3M625 411h3M631 411h3M637 411h3M643 411h3M649 411h3M655 411h3M661 411h3M667 411h3M673 411h3M679 411h3" stroke="#c8c8c8" stroke-width="1" fill="none" transform="translate(0,0.5)"/>
<path d="M13 434h3M19 434h3M25 434h3M31 434h3M37 434h3M43 434h3M49 434h3M55 434h3M61 434h3M67 434h3M73 434h3M79 434h3M85 434h3M91 434h3M97 434h3M103 434h3M109 434h3M115 434h3M121 434h3M127 434h3M133 434h3M139 434h3M145 434h3M151 434h3M157 434h3M163 434h3M169 434h3M175 434h3M181 434h3M187 434h3M193 434h3M199 434h3M205 434h3M211 434h3M217 434h3M223 434h3M229 434h3M235 434h3M241 434h3M247 434h3M253 434h3M259 434h3M265 434h3M271 434h3M277 434h3M283 434h3M289 434h3M295 434h3M301 434h3M307 434h3M313 434h3M319 434h3M325 434h3M331 434h3M337 434h3M343 434h3M349 434h3M355 434h3M361 434h3M367 434h3M373 434h3M379 434h3M385 434h3M391 434h3M397 434h3M403 434h3M409 434h3M415 434h3M421 434h3M427 434h3M433 434h3M439 434h3M445 434h3M451 434h3M457 434h3M463 434h3M469 434h3M475 434h3M481 434h3M487 434h3M493 434h3M499 434h3M505 434h3M511 434h3M517 434h3M523 434h3M529 434h3M535 434h3M541 434h3M547 434h3M553 434h3M559 434h3M565 434h3M571 434h3M577 434h3M583 434h3M589 434h3M595 434h3M601 434h3M607 434h3M613 434h3M619 434h3M625 434h3M631 434h3M637 434h3M643 434h3M649 434h3M655 434h3M661 434h3M667 434h3M673 434h3M679 434h3" stroke="#c8c8c8" stroke-width="1" fill="none" transform="translate(0,0.5)"/>
<path d="M13 512h3M19 512h3M25 512h3M31 512h3M37 512h3M43 512h3M49 512h3M55 512h3M61 512h3M67 512h3M73 512h3M79 512h3M85 512h3M91 512h3M97 512h3M103 512h3M109 512h3M115 512h3M121 512h3M127 512h3M133 512h3M139 512h3M145 512h3M151 512h3M157 512h3M163 512h3M169 512h3M175 512h3M181 512h3M187 512h3M193 512h3M199 512h3M205 512h3M211 512h3M217 512h3M223 512h3M229 512h3M235 512h3M241 512h3M247 512h3M253 512h3M259 512h3M265 512h3M271 512h3M277 512h3M283 512h3M289 512h3M295 512h3M301 512h3M307 512h3M313 512h3M319 512h3M325 512h3M331 512h3M337 512h3M343 512h3M349 512h3M355 512h3M361 512h3M367 512h3M373 512h3M379 512h3M385 512h3M391 512h3M397 512h3M403 512h3M409 512h3M415 512h3M421 512h3M427 512h3M433 512h3M439 512h3M445 512h3M451 512h3M457 512h3M463 512h3M469 512h3M475 512h3M481 512h3M487 512h3M493 512h3M499 512h3M505 512h3M511 512h3M517 512h3M523 512h3M529 512h3M535 512h3M541 512h3M547 512h3M553 512h3M559 512h3M565 512h3M571 512h3M577 512h3M583 512h3M589 512h3M595 512h3M601 512h3M607 512h3M613 512h3M619 512h3M625 512h3M631 512h3M637 512h3M643 512h3M649 512h3M655 512h3M661 512h3M667 512h3M673 512h3M679 512h3" stroke="#c8c8c8" stroke-width="1" fill="none" transform="translate(0,0.5)"/>
<path d="M13 535h3M19 535h3M25 535h3M31 535h3M37 535h3M43 535h3M49 535h3M55 535h3M61 535h3M67 535h3M73 535h3M79 535h3M85 535h3M91 535h3M97 535h3M103 535h3M109 535h3M115 535h3M121 535h3M127 535h3M133 535h3M139 535h3M145 535h3M151 535h3M157 535h3M163 535h3M169 535h3M175 535h3M181 535h3M187 535h3M193 535h3M199 535h3M205 535h3M211 535h3M217 535h3M223 535h3M229 535h3M235 535h3M241 535h3M247 535h3M253 535h3M259 535h3M265 535h3M271 535h3M277 535h3M283 535h3M289 535h3M295 535h3M301 535h3M307 535h3M313 535h3M319 535h3M325 535h3M331 535h3M337 535h3M343 535h3M349 535h3M355 535h3M361 535h3M367 535h3M373 535h3M379 535h3M385 535h3M391 535h3M397 535h3M403 535h3M409 535h3M415 535h3M421 535h3M427 535h3M433 535h3M439 535h3M445 535h3M451 535h3M457 535h3M463 535h3M469 535h3M475 535h3M481 535h3M487 535h3M493 535h3M499 535h3M505 535h3M511 535h3M517 535h3M523 535h3M529 535h3M535 535h3M541 535h3M547 535h3M553 535h3M559 535h3M565 535h3M571 535h3M577 535h3M583 535h3M589 535h3M595 535h3M601 535h3M607 535h3M613 535h3M619 535h3M625 535h3M631 535h3M637 535h3M643 535h3M649 535h3M655 535h3M661 535h3M667 535h3M673 535h3M679 535h3" stroke="#c8c8c8" stroke-width="1" fill="none" transform="translate(0,0.5)"/>
</g>
<g shape-rendering="crispEdges" fill="#fff">
<rect x="11" y="33" width="674" height="1"/>
<rect x="11" y="376" width="674" height="1"/>
<rect x="11" y="33" width="1" height="344"/>
<rect x="684" y="33" width="1" height="344"/>
<rect x="11" y="378" width="674" height="1"/>
<rect x="11" y="551" width="675" height="1"/>
<rect x="11" y="378" width="1" height="174"/>
<rect x="684" y="378" width="1" height="174"/>
<rect x="685" y="39" width="2" height="1"/>
<rect x="685" y="72" width="2" height="1"/>
<rect x="685" y="105" width="2" height="1"/>
<rect x="685" y="138" width="2" height="1"/>
<rect x="685" y="172" width="2" height="1"/>
<rect x="685" y="205" width="2" height="1"/>
<rect x="685" y="238" width="2" height="1"/>
<rect x="685" y="272" width="2" height="1"/>
<rect x="685" y="305" width="2" height="1"/>
<rect x="685" y="338" width="2" height="1"/>
<rect x="685" y="371" width="2" height="1"/>
<rect x="685" y="379" width="1" height="1"/>
<rect x="685" y="473" width="1" height="1"/>
<rect x="12" y="552" width="1" height="3"/>
<rect x="76" y="552" width="1" height="3"/>
<rect x="140" y="552" width="1" height="3"/>
<rect x="204" y="552" width="1" height="3"/>
<rect x="268" y="552" width="1" height="3"/>
<rect x="332" y="552" width="1" height="3"/>
<rect x="396" y="552" width="1" height="3"/>
<rect x="460" y="552" width="1" height="3"/>
<rect x="524" y="552" width="1" height="3"/>
</g>
<text class="ax" x="690" y="43">72.245</text>
<text class="ax" x="690" y="76">72.205</text>
<text class="ax" x="690" y="109">72.165</text>
<text class="ax" x="690" y="142">72.125</text>
<text class="ax" x="690" y="176">72.085</text>
<text class="ax" x="690" y="209">72.045</text>
<text class="ax" x="690" y="242">72.005</text>
<text class="ax" x="690" y="276">71.965</text>
<text class="ax" x="690" y="309">71.925</text>
<text class="ax" x="690" y="342">71.885</text>
<text class="ax" x="690" y="375">71.845</text>
<text class="ax" x="688" y="389">120</text>
<text class="ax" x="687.4" y="399">100</text>
<text class="ax" x="687" y="415">80</text>
<text class="ax" x="687" y="438">50</text>
<text class="ax" x="688" y="477">0.00</text>
<text class="ax" x="687" y="516">-50</text>
<text class="ax" x="687" y="539">-80</text>
<text class="ax" x="688" y="548.5">-100</text>
<rect x="686" y="104" width="36" height="11" fill="#fff" shape-rendering="crispEdges"/>
<text class="ax" x="690" y="113" style="fill:#000;stroke:#000">72.161</text>
<text class="ax tm" x="11" y="564">20 Nov 2020</text>
<text class="ax tm" x="75" y="564">20 Nov 23:30</text>
<text class="ax tm" x="139" y="564">23 Nov 00:10</text>
<text class="ax tm" x="203" y="564">23 Nov 00:50</text>
<text class="ax tm" x="267" y="564">23 Nov 01:30</text>
<text class="ax tm" x="331" y="564">23 Nov 02:10</text>
<text class="ax tm" x="395" y="564">23 Nov 02:50</text>
<text class="ax tm" x="459" y="564">23 Nov 03:30</text>
<text class="ax tm" x="523" y="564">23 Nov 04:10</text>
<path d="M15 39h7l-3.5 4.5z" fill="#fff"/>
<text class="ax hd" x="26.6" y="45" xml:space="preserve">NZDJPY,M5  72.159 72.168 72.151 72.161</text>
<text class="ax hd" x="16" y="391">R(9,26,52) 7.9 20.4 89.6</text>
<text x="29" y="22" style="font-size:12px;fill:#000;letter-spacing:-0.42px">NZDJPY,M5</text>
<g shape-rendering="crispEdges">
<rect x="10" y="10" width="12" height="9" fill="#4a86f7"/><rect x="11" y="12" width="10" height="6" fill="#fff"/>
<rect x="10.5" y="10.5" width="11" height="8" fill="none" stroke="#3d8f86" stroke-dasharray="1 1"/>
<rect x="13" y="15" width="11" height="9" fill="#4a86f7"/><rect x="14" y="17" width="9" height="6" fill="#fff"/>
<rect x="13.5" y="15.5" width="10" height="8" fill="none" stroke="#3d8f86" stroke-dasharray="1 1"/>
</g>
<polyline points="12.5,14.5 13.5,13.5 14.5,14.5" fill="none" stroke="#3f7cf3" stroke-width="1.25"/>
<polyline points="16.5,13 17.5,14.5 18.5,14.5" fill="none" stroke="#3f7cf3" stroke-width="1.25"/>
<polyline points="15.5,18.5 17.5,21.5 19.5,18.5 21.5,21.5" fill="none" stroke="#3f7cf3" stroke-width="1.25"/>
<rect x="625.5" y="8.5" width="31" height="17" rx="2.5" fill="url(#bt)" stroke="#47526b"/><rect x="626.5" y="9.5" width="29" height="15" rx="1.5" fill="none" stroke="#e8f0fa" stroke-opacity="0.55"/>
<rect x="659.5" y="8.5" width="31" height="17" rx="2.5" fill="url(#bt)" stroke="#47526b"/><rect x="660.5" y="9.5" width="29" height="15" rx="1.5" fill="none" stroke="#e8f0fa" stroke-opacity="0.55"/>
<rect x="693.5" y="8.5" width="31" height="17" rx="2.5" fill="url(#bc)" stroke="#45151d"/><rect x="694.5" y="9.5" width="29" height="15" rx="1.5" fill="none" stroke="#f6cfc6" stroke-opacity="0.55"/>
<rect x="635.5" y="16.5" width="10" height="4" rx="1" fill="#f8f8f8" stroke="#4a5068"/>
<rect x="669.5" y="12.5" width="10" height="8" rx="1" fill="#f8f8f8" stroke="#4a5068"/><rect x="672.5" y="15.5" width="4" height="2" fill="#8aa4c8" stroke="#4a5068"/>
<polygon points="703.4,12.4 707.4,12.4 708.5,14 709.6,12.4 713.6,12.4 710.7,16.5 713.6,20.6 709.6,20.6 708.5,19 707.4,20.6 703.4,20.6 706.3,16.5" fill="#f4f4f4" stroke="#444e68" stroke-width="0.9" stroke-linejoin="round"/>
</svg></body></html>
